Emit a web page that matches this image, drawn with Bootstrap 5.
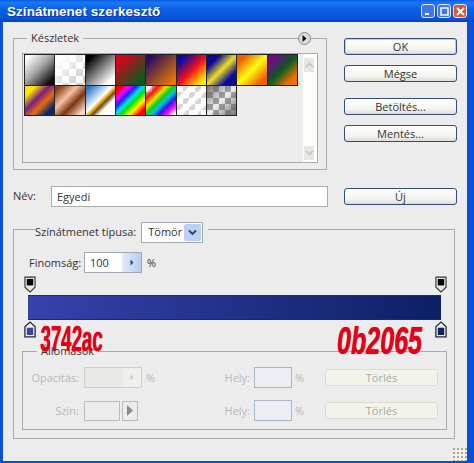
<!DOCTYPE html>
<html lang="hu"><head><meta charset="utf-8">
<title>Színátmenet szerkesztő</title>
<link href="https://cdn.jsdelivr.net/npm/bootstrap@5.3.0/dist/css/bootstrap.min.css" rel="stylesheet">
<style>
html,body{margin:0;width:474px;height:463px;overflow:hidden;background:#0a4fd6}
body{font-family:"Open Sans","Liberation Sans",sans-serif;font-size:11px;color:#333;line-height:1.2}
.win{width:474px;height:463px;position:relative;background:#0a4fd6;padding:0 7px 2px 3px;display:flex;flex-direction:column}
.ttl{height:22px;margin:0 -7px 0 -3px;padding:0 7px 0 7px;background:linear-gradient(180deg,#0a5ae6 0,#1a78f2 12%,#0c5ee6 45%,#0a53dc 85%,#0a3fb8 100%);flex:none}
.ttl-t{font:bold 13.4px "Liberation Sans",sans-serif;color:#fff;letter-spacing:.1px;text-shadow:1px 1px 0 #0a3a9a}
.tb-set{gap:2px}
.tb{width:14px;height:14px;border:1px solid #dfe8fb;border-radius:3px;background:#3f78e6;display:flex;align-items:center;justify-content:center}
.tb-x{background:#e0562f}
.surface{flex:1;background:#ececec;position:relative;min-height:0;padding:16px 0 0 10px}
.grp{border:1px solid #a9a9a5;position:relative}
.preset-grp{width:314px;height:132px;padding:14px 8px 0 8px}
.leg{position:absolute;background:#ececec;padding:0 4px;top:-8px;white-space:nowrap}
.leg1{left:13px}
.menu-dot{position:absolute;right:15px;top:-7px;width:13px;height:13px;border-radius:50%;background:#ddd;border:1px solid #888;display:flex;align-items:center;justify-content:center}
.lbox{height:110px;border:1px solid #a9a9a5;background:#ededed;display:flex;position:relative}
.sw-grid{display:grid;grid-template-columns:repeat(9,30.33px);grid-auto-rows:30.5px;padding:0 0 0 1px;flex:1;align-content:start}
.sw{border:1px solid #222;margin:0 -1px -1px 0}
.sbar{width:14px;background:#fefefb;display:flex;flex-direction:column;justify-content:space-between;padding:4px 3px 2px 1px}
.sb-btn{height:14px;background:#e6e7e1;display:flex;align-items:center;justify-content:center}
.right-col{width:113px;margin-left:16px}
.xbtn{display:block;width:113px;height:17px;padding:0;border:1px solid #2f4f78;border-radius:3px;background:linear-gradient(180deg,#fff,#f3f3ee 70%,#dcdcd4);font-size:11px;line-height:15px;color:#333;text-align:center}
.xbtn-def{box-shadow:inset 0 0 0 1px #b8d0ee}
.gap-a{margin-top:10px}.gap-b{margin-top:16px}.gap-c{margin-top:46px}
.lbl-name{width:38px}
.name-row{margin-top:15px;height:22px}
.name-in{width:277px;height:21px;border:1px solid #a8aeb0;background:#fff;padding:0 5px;line-height:19px}
.main-grp{width:442px;height:210px;margin-top:22px;padding:0 7px 0 8px;position:relative}
.type-row{position:absolute;left:21px;top:-8px;background:#ececec;padding:0 5px 0 0;height:20px}
.sel{width:62px;height:21px;border:1px solid #9fa9b4;background:#fff;margin-left:5px;padding-left:6px}
.sel-arr{width:17px;height:17px;margin:1px;background:#bcd0f4;display:flex;align-items:center;justify-content:center;border-radius:2px}
.fin-row{padding:19px 0 0 7px;height:46px}
.fin-lbl{width:50px}
.fin-in{width:58px;height:21px;border:1px solid #9fa9b4;background:#fff;margin:0 5px 0 5px;padding-left:5px}
.spin{width:19px;height:19px;background:linear-gradient(90deg,#e2ebfb,#b9cdf0);display:flex;align-items:center;justify-content:center}
.stops{height:19px;margin:0 0 0 2px}
.stop-w{width:12px;height:17px;display:block}
.grad{height:25px;margin-left:6px;margin-right:6px;background:linear-gradient(90deg,#3742ac,#0b2065);border-top:1px solid #1a2a80;border-bottom:1px solid #1a2a6a}
.stops-b{height:17px;margin:1px 0 0 2px}
.note{position:absolute;color:#e00018;font:bold 36px "Liberation Sans",sans-serif;line-height:1;text-shadow:0 0 1px #e00018;white-space:nowrap;transform-origin:left top}
.note1{left:27px;top:91px;transform:scaleX(.52) skewX(-4deg)}
.note2{left:323px;top:92px;font-size:38px;font-style:italic;transform:scaleX(.66)}
.sub-grp{height:79px;margin-top:13px;position:relative;color:#b8b8b8;padding-top:15px}
.leg2{left:14px;top:-8px;color:#333}
.dim-row{height:21px;margin-bottom:12px;margin-left:2px}
.dim-first{width:131px}
.dim-lbl{width:54px;text-align:right}
.dim-in{width:58px;height:21px;border:1px solid #cfcfca;background:#e9e9e5;margin:0 4px 0 5px;display:flex;justify-content:flex-end}
.dim-spin{width:19px;background:#efefeb;display:flex;align-items:center;justify-content:center}
.col-box{width:36px;height:20px;border:1px solid #bdbdb8;margin-left:5px}
.col-arr{width:16px;height:20px;border:1px solid #bdbdb8;margin-left:2px;display:flex;align-items:center;justify-content:center}
.hely{width:26px;text-align:right;margin-left:68px}
.pos-in{width:38px;height:21px;border:1px solid #a9b6c6;background:#ebeef2;margin:0 3px 0 4px}
.pct{width:11px}
.del{width:113px;height:17px;border:1px solid #dcdcd2;border-radius:3px;background:#f4f3ea;text-align:center;line-height:15px;color:#a8a8a8;margin-left:19px;padding:0}
.grip{position:absolute;right:0;bottom:0;width:15px;height:14px;background:radial-gradient(circle,#a5a598 0 1px,transparent 1.2px) 0 0/4px 4px,#f2f1e6}
.s1{background:linear-gradient(135deg,#fff 8%,#aaa 45%,#140c0c 88%)}
.s2{background:linear-gradient(135deg,#fff 15%,rgba(255,255,255,0) 90%),conic-gradient(#ccc 25%,#fff 0 50%,#ccc 0 75%,#fff 0) 0 0/14px 14px}
.s3{background:linear-gradient(135deg,#000 12%,#fff 85%)}
.s4{background:linear-gradient(135deg,#e0001c 12%,#0b5a22 85%)}
.s5{background:linear-gradient(135deg,#240c64 10%,#ea7800 90%)}
.s6{background:linear-gradient(135deg,#0808a8 15%,#f0101a 52%,#ffee00 88%)}
.s7{background:linear-gradient(135deg,#0a0a9a 22%,#eee020 50%,#0a0a9a 78%)}
.s8{background:linear-gradient(135deg,#f06000 15%,#ffff10 50%,#f06000 85%)}
.s9{background:linear-gradient(135deg,#6a0f80 18%,#0a5a20 50%,#f07000 82%)}
.s10{background:linear-gradient(135deg,#ffe600 18%,#78207c 42%,#e86a12 62%,#08286e 85%)}
.s11{background:linear-gradient(135deg,#8a3f18 10%,#f4c4a4 38%,#7c3312 62%,#f6d8c4 90%)}
.s12{background:linear-gradient(135deg,#2478c8 8%,#fff 46%,#e0a810 54%,#6a4a06 60%,#fff 72%)}
.s13{background:linear-gradient(135deg,#f00000 10%,#ff00ff 22%,#2020ff 35%,#00e0ff 47%,#00e000 58%,#ffff00 72%,#ff0000 88%)}
.s14{background:linear-gradient(135deg,rgba(255,255,255,0) 8%,#ff1010 22%,#ffe000 35%,#10d010 47%,#10c0e0 58%,#2020e0 70%,#ff00ff 82%,rgba(255,255,255,0) 95%),conic-gradient(#bbb 25%,#fff 0 50%,#bbb 0 75%,#fff 0) 0 0/12px 12px}
.s15{background:repeating-linear-gradient(135deg,#fff 0 3px,rgba(255,255,255,.15) 5px 8px,#fff 10px),conic-gradient(#ccc 25%,#fff 0 50%,#ccc 0 75%,#fff 0) 0 0/12px 12px}
.s16{background:linear-gradient(135deg,rgba(90,90,90,.85),rgba(90,90,90,.1) 50%,rgba(90,90,90,.85)),conic-gradient(#aaa 25%,#fff 0 50%,#aaa 0 75%,#fff 0) 0 0/12px 12px}
</style></head><body>
<div class="win">
 <div class="ttl d-flex align-items-center justify-content-between">
  <span class="ttl-t">Színátmenet szerkesztő</span>
  <div class="d-flex tb-set">
   <span class="tb"><svg width="9" height="9" viewBox="0 0 9 9"><rect x="1" y="6" width="4" height="2" fill="#fff"/></svg></span>
   <span class="tb"><svg width="9" height="9" viewBox="0 0 9 9"><rect x="1" y="1" width="7" height="7" fill="none" stroke="#fff" stroke-width="1.4"/></svg></span>
   <span class="tb tb-x"><svg width="9" height="9" viewBox="0 0 9 9"><path d="M1 1l7 7M8 1L1 8" stroke="#fff" stroke-width="1.8"/></svg></span>
  </div>
 </div>
 <div class="surface">
  <div class="d-flex">
   <div>
    <div class="grp preset-grp">
     <span class="leg leg1">Készletek</span>
     <span class="menu-dot"><svg width="7" height="7" viewBox="0 0 7 7"><path d="M1.500 0l4 3.500-4 3.500z" fill="#111"/></svg></span>
     <div class="lbox">
      <div class="sw-grid">
       <div class="sw s1"></div><div class="sw s2"></div><div class="sw s3"></div><div class="sw s4"></div><div class="sw s5"></div><div class="sw s6"></div><div class="sw s7"></div><div class="sw s8"></div><div class="sw s9"></div>
       <div class="sw s10"></div><div class="sw s11"></div><div class="sw s12"></div><div class="sw s13"></div><div class="sw s14"></div><div class="sw s15"></div><div class="sw s16"></div>
      </div>
      <div class="sbar">
       <div class="sb-btn"><svg width="9" height="6" viewBox="0 0 9 6"><path d="M1 5l3.500-3.500L8 5" fill="none" stroke="#c4c4be" stroke-width="1.500"/></svg></div>
       <div class="sb-btn"><svg width="9" height="6" viewBox="0 0 9 6"><path d="M1 1l3.500 3.500L8 1" fill="none" stroke="#c4c4be" stroke-width="1.500"/></svg></div>
      </div>
     </div>
    </div>
    <div class="name-row d-flex align-items-center">
     <span class="lbl-name">Név:</span><div class="name-in">Egyedi</div>
    </div>
   </div>
   <div class="right-col">
    <button type="button" class="xbtn xbtn-def">OK</button>
    <button type="button" class="xbtn gap-a">Mégse</button>
    <button type="button" class="xbtn gap-b">Betöltés...</button>
    <button type="button" class="xbtn gap-a">Mentés...</button>
    <button type="button" class="xbtn gap-c">Új</button>
   </div>
  </div>
  <div class="grp main-grp">
   <div class="type-row d-flex align-items-center">
    <span>Színátmenet típusa:</span>
    <div class="sel d-flex align-items-center justify-content-between"><span>Tömör</span><span class="sel-arr"><svg width="9" height="7" viewBox="0 0 9 7"><path d="M1 1.500l3.500 3.500L8 1.500" fill="none" stroke="#26466e" stroke-width="1.800"/></svg></span></div>
   </div>
   <div class="fin-row d-flex align-items-center">
    <span class="fin-lbl">Finomság:</span>
    <div class="fin-in d-flex align-items-center justify-content-between"><span>100</span><span class="spin"><svg width="6" height="7" viewBox="0 0 6 7"><path d="M1.500 0.500l3 3-3 3z" fill="#2a4a7a"/></svg></span></div>
    <span>%</span>
   </div>
   <div class="stops d-flex justify-content-between">
    <svg class="stop-w" viewBox="0 0 13 18"><path d="M1 1h11v11l-5.500 5L1 12z" fill="#e8e8e8" stroke="#333" stroke-width="1.200"/><rect x="3" y="3" width="7" height="7" fill="#000"/></svg>
    <svg class="stop-w" viewBox="0 0 13 18"><path d="M1 1h11v11l-5.500 5L1 12z" fill="#e8e8e8" stroke="#333" stroke-width="1.200"/><rect x="3" y="3" width="7" height="7" fill="#000"/></svg>
   </div>
   <div class="grad"></div>
   <div class="stops-b d-flex justify-content-between">
    <svg class="stop-w" viewBox="0 0 13 18"><path d="M1 17h11V6L6.500 1 1 6z" fill="#fff" stroke="#222" stroke-width="1.400"/><rect x="3" y="7" width="7" height="8" fill="#3742ac"/></svg>
    <svg class="stop-w" viewBox="0 0 13 18"><path d="M1 17h11V6L6.500 1 1 6z" fill="#fff" stroke="#222" stroke-width="1.400"/><rect x="3" y="7" width="7" height="8" fill="#0b2065"/></svg>
   </div>
   <div class="grp sub-grp">
    <span class="leg leg2">Állomások</span>
    <div class="dim-row d-flex align-items-center">
     <div class="dim-first d-flex align-items-center">
      <span class="dim-lbl">Opacitás:</span>
      <div class="dim-in"><span class="dim-spin"><svg width="6" height="7" viewBox="0 0 6 7"><path d="M1.500 0.500l3 3-3 3z" fill="#c8c8c8"/></svg></span></div><span>%</span>
     </div>
     <span class="hely">Hely:</span><div class="pos-in"></div><span class="pct">%</span>
     <div class="del">Törlés</div>
    </div>
    <div class="dim-row d-flex align-items-center">
     <div class="dim-first d-flex align-items-center">
      <span class="dim-lbl">Szín:</span>
      <div class="col-box"></div>
      <div class="col-arr"><svg width="8" height="11" viewBox="0 0 8 11"><path d="M1 0l6 5.500-6 5.500z" fill="#8a8a8a"/></svg></div>
     </div>
     <span class="hely">Hely:</span><div class="pos-in"></div><span class="pct">%</span>
     <div class="del">Törlés</div>
    </div>
   </div>
   <span class="note note1">3742ac</span>
   <span class="note note2">0b2065</span>
  </div>
  <div class="grip"></div>
 </div>
</div>
<script src="https://cdn.jsdelivr.net/npm/bootstrap@5.3.0/dist/js/bootstrap.bundle.min.js"></script>
</body></html>
